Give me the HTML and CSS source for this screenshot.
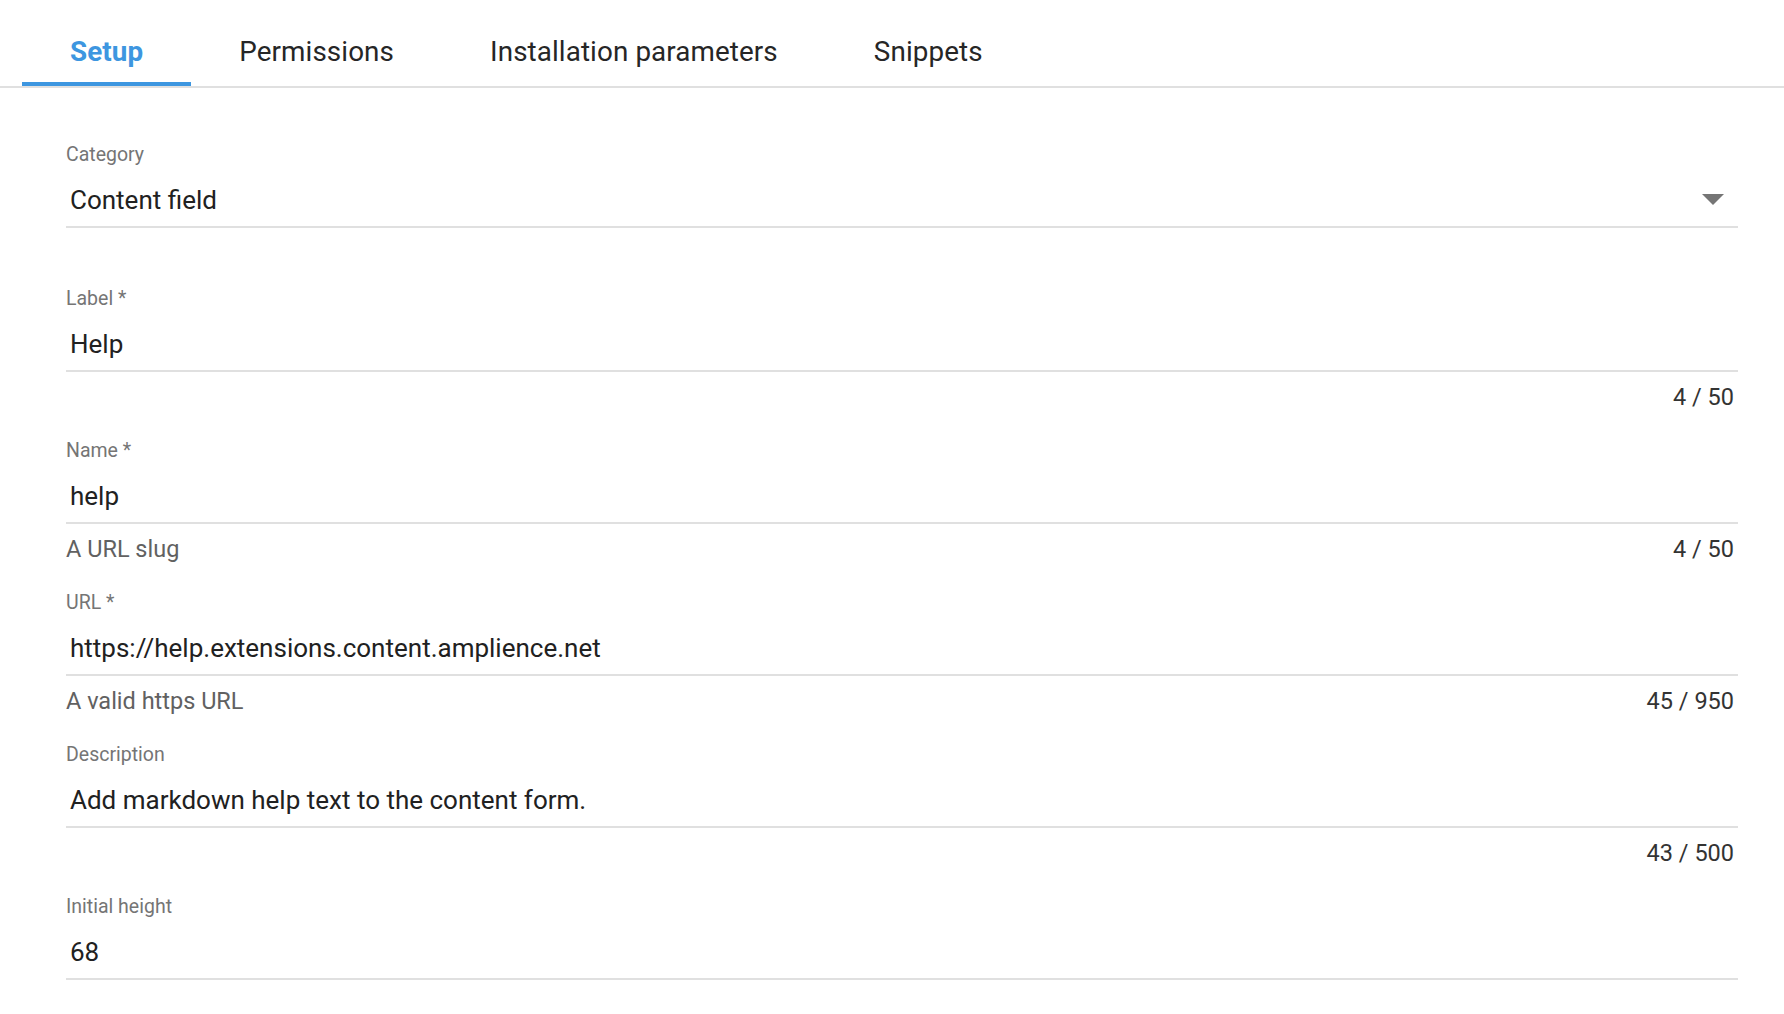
FILE: index.html
```html
<!DOCTYPE html>
<html>
<head>
<meta charset="utf-8">
<link rel="stylesheet" href="styles.css">
</head>
<body>
<nav class="tabs">
  <div class="tab active">Setup</div>
  <div class="tab">Permissions</div>
  <div class="tab">Installation parameters</div>
  <div class="tab">Snippets</div>
</nav>
<form class="form">
  <div class="field field-select">
    <div class="label">Category</div>
    <div class="control">
      <span class="value">Content field</span>
      <svg class="arrow" width="22" height="11" viewBox="0 0 22 11"><path d="M0 0 L22 0 L11 11 Z" fill="#757575"/></svg>
    </div>
  </div>
  <div class="field">
    <div class="label">Label *</div>
    <div class="control"><span class="value">Help</span></div>
    <div class="hint"><span class="helper"></span><span class="counter">4 / 50</span></div>
  </div>
  <div class="field">
    <div class="label">Name *</div>
    <div class="control"><span class="value">help</span></div>
    <div class="hint"><span class="helper">A URL slug</span><span class="counter">4 / 50</span></div>
  </div>
  <div class="field">
    <div class="label">URL *</div>
    <div class="control"><span class="value">https://help.extensions.content.amplience.net</span></div>
    <div class="hint"><span class="helper">A valid https URL</span><span class="counter">45 / 950</span></div>
  </div>
  <div class="field">
    <div class="label">Description</div>
    <div class="control"><span class="value">Add markdown help text to the content form.</span></div>
    <div class="hint"><span class="helper"></span><span class="counter">43 / 500</span></div>
  </div>
  <div class="field">
    <div class="label">Initial height</div>
    <div class="control"><span class="value">68</span></div>
  </div>
</form>
</body>
</html>
```

FILE: styles.css
```css
html, body {
  margin: 0;
  padding: 0;
  background: #ffffff;
  font-family: Roboto, "Liberation Sans", sans-serif;
  overflow: hidden;
}

.tabs {
  display: flex;
  padding-left: 22px;
  border-bottom: 2px solid #e0e0e0;
}

.tab {
  position: relative;
  padding: 35px 48px 17px;
  font-size: 27.8px;
  line-height: 34px;
  color: #262626;
  letter-spacing: 0.1px;
}

.tab.active {
  color: #3d96e0;
  font-weight: 700;
}

.tab.active::after {
  content: "";
  position: absolute;
  left: 0;
  right: 0;
  bottom: 0;
  height: 4px;
  background: #3d96e0;
}

.form {
  margin: 56px 46px 0 66px;
}

.field {
  margin-bottom: 29px;
}

.field-select {
  margin-bottom: 60px;
}

.label {
  font-size: 19.5px;
  line-height: 22px;
  color: #757575;
}

.control {
  display: flex;
  align-items: center;
  justify-content: space-between;
  margin-top: 19px;
  padding: 0 14px 11px 4px;
  border-bottom: 2px solid #e0e0e0;
}

.value {
  font-size: 26px;
  line-height: 30px;
  color: #212121;
}

.arrow {
  display: block;
  margin-top: -2px;
}

.hint {
  display: flex;
  justify-content: space-between;
  margin-top: 11px;
  padding-right: 4px;
  font-size: 23.5px;
  line-height: 28px;
}

.helper {
  color: #616161;
}

.counter {
  color: #333333;
}
```
